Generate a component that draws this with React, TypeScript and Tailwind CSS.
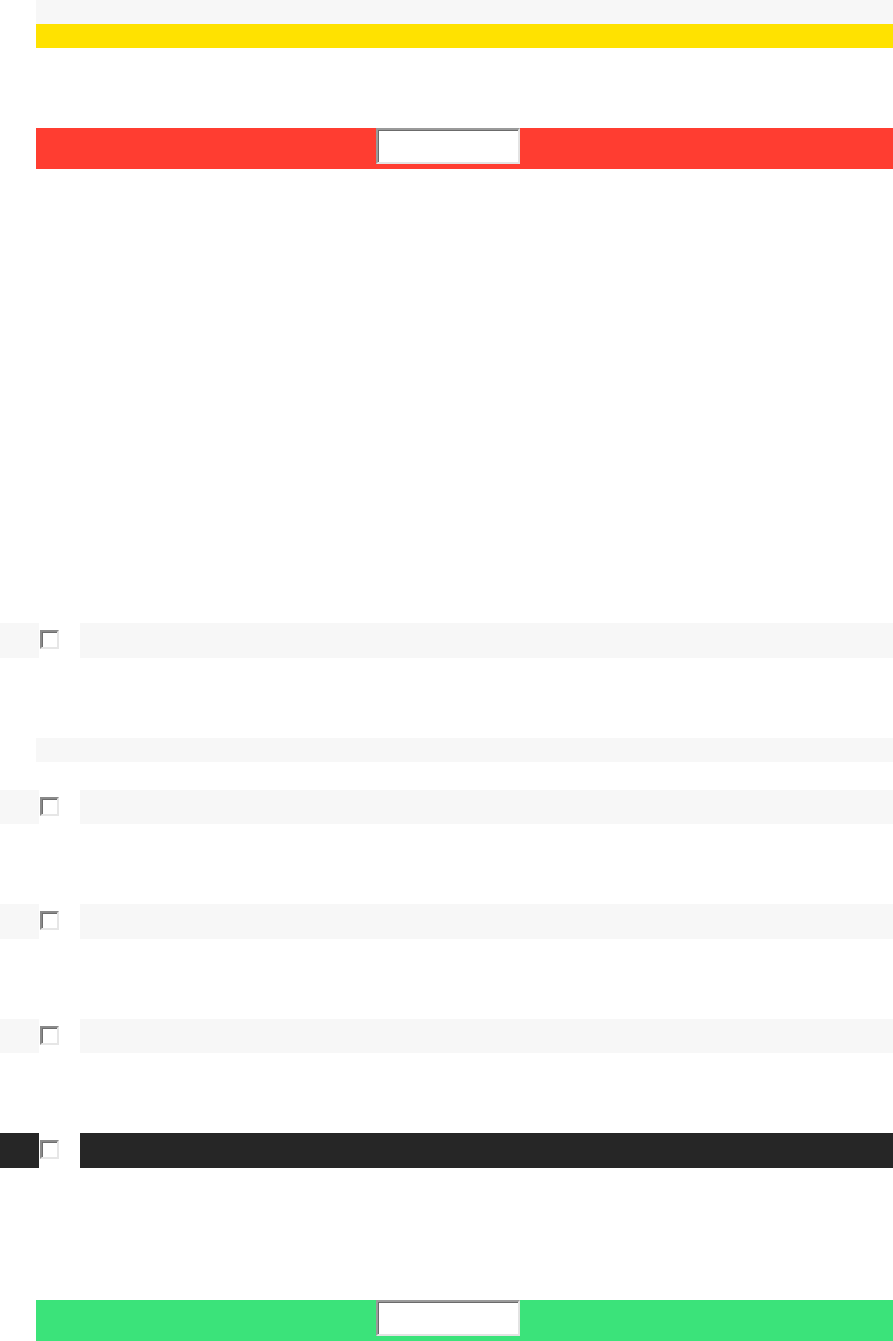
import React from 'react';

function Field() {
  return (
    <div className="w-[144px] h-[36px] bg-white border-2 border-t-[#9a9a9a] border-l-[#9a9a9a] border-b-[#e3e3e3] border-r-[#e3e3e3] shadow-[inset_1px_1px_0_#6b6b6b]" />
  );
}

function ColorBar({ color }: { color: string }) {
  return (
    <div className={`ml-[36px] h-[41px] ${color}`}>
      <div className="pl-[340px]">
        <Field />
      </div>
    </div>
  );
}

function CheckRow({ dark = false }: { dark?: boolean }) {
  const fill = dark ? 'bg-[#262626]' : 'bg-[#f7f7f7]';
  return (
    <div className="flex h-[34.5px]">
      <div className={`w-[39px] ${fill}`} />
      <div className="w-[41px] bg-white">
        <div className="ml-[1px] mt-[7px] w-[19px] h-[19px] bg-white border-2 border-t-[#8a8a8a] border-l-[#8a8a8a] border-b-[#e6e6e6] border-r-[#e6e6e6] shadow-[inset_1px_1px_0_#6e6e6e]" />
      </div>
      <div className={`flex-1 ${fill}`} />
    </div>
  );
}

export default function App() {
  return (
    <div className="w-[893px] h-[1341px] bg-white overflow-hidden flex flex-col" style={{ fontFamily: '"Liberation Sans", Arial, sans-serif' }}>
      <div className="ml-[36px] h-[24px] bg-[#f7f7f7] shrink-0" />
      <div className="ml-[36px] h-[24px] bg-[#ffe200] shrink-0" />
      <div className="h-[80px] shrink-0" />
      <ColorBar color="bg-[#ff3d31]" />
      <div className="h-[454px] shrink-0" />
      <CheckRow />
      <div className="h-[80px] shrink-0" />
      <div className="ml-[36px] h-[24px] bg-[#f7f7f7] shrink-0" />
      <div className="h-[28px] shrink-0" />
      <CheckRow />
      <div className="h-[80px] shrink-0" />
      <CheckRow />
      <div className="h-[80px] shrink-0" />
      <CheckRow />
      <div className="h-[80px] shrink-0" />
      <CheckRow dark />
      <div className="h-[132px] shrink-0" />
      <ColorBar color="bg-[#3be37a]" />
    </div>
  );
}
